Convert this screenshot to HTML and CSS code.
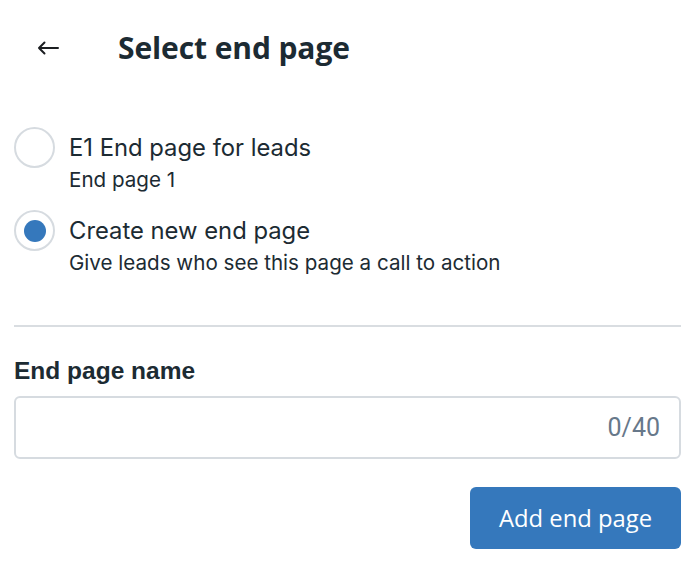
FILE: index.html
```html
<!DOCTYPE html>
<html>
<head>
<meta charset="utf-8">
<link rel="stylesheet" href="styles.css">
</head>
<body>
<div class="page">
  <header class="header">
    <button class="back" aria-label="Back">
      <svg width="22" height="14" viewBox="0 0 22 14" fill="none" stroke="#1c1e21" stroke-width="2" stroke-linecap="round" stroke-linejoin="round">
        <path d="M21 7H2M7.5 1.5L2 7l5.5 5.5"/>
      </svg>
    </button>
    <h1 class="title">Select end page</h1>
  </header>

  <div class="options">
    <label class="option">
      <span class="radio"></span>
      <span class="option-text">
        <span class="option-title">E1 End page for leads</span>
        <span class="option-sub">End page 1</span>
      </span>
    </label>
    <label class="option">
      <span class="radio checked"><span class="dot"></span></span>
      <span class="option-text">
        <span class="option-title">Create new end page</span>
        <span class="option-sub">Give leads who see this page a call to action</span>
      </span>
    </label>
  </div>

  <hr class="divider">

  <div class="field">
    <div class="field-label">End page name</div>
    <div class="input">
      <span class="counter">0/40</span>
    </div>
  </div>

  <div class="actions">
    <button class="primary">Add end page</button>
  </div>
</div>
</body>
</html>
```
FILE: styles.css
```css
* { box-sizing: border-box; }
html, body { margin: 0; padding: 0; background: #fff; }
body {
  font-family: Inter, "Liberation Sans", sans-serif;
  color: #1c2b33;
}
.page {
  padding: 0 19px 0 14px;
}
.header {
  display: flex;
  align-items: center;
  height: 95px;
  padding-left: 23px;
}
.back {
  border: 0;
  background: none;
  padding: 0;
  width: 22px;
  height: 14px;
  display: flex;
}
.title {
  margin: 0 0 0 59px;
  font-family: "Open Sans", sans-serif;
  font-weight: 700;
  font-size: 30px;
  color: #1c2b33;
  letter-spacing: -0.1px;
}
.options {
  display: flex;
  flex-direction: column;
  gap: 14px;
  padding-top: 32px;
}
.option {
  display: flex;
  align-items: flex-start;
}
.radio {
  flex: none;
  width: 41px;
  height: 41px;
  border-radius: 50%;
  border: 2px solid #d6dbe0;
  display: flex;
  align-items: center;
  justify-content: center;
}
.dot {
  width: 22px;
  height: 22px;
  border-radius: 50%;
  background: #3578bc;
}
.option-text {
  display: flex;
  flex-direction: column;
  margin-left: 14px;
  padding-top: 4px;
}
.option-title {
  font-size: 23.8px;
  line-height: 33px;
}
.option-sub {
  font-size: 20.6px;
  line-height: 32px;
}
.divider {
  border: 0;
  border-top: 2px solid #d9dde1;
  margin: 46px 0 0 0;
}
.field {
  padding-top: 31px;
}
.field-label {
  font-family: "Liberation Sans", Arial, sans-serif;
  font-weight: 700;
  font-size: 24.5px;
  line-height: 26px;
  color: #1c2b33;
}
.input {
  margin-top: 12px;
  height: 63px;
  border: 2px solid #d6dbe0;
  border-radius: 6px;
  display: flex;
  align-items: center;
  justify-content: flex-end;
  padding-right: 19px;
}
.counter {
  font-family: Roboto, sans-serif;
  font-size: 25px;
  color: #67788a;
}
.actions {
  display: flex;
  justify-content: flex-end;
  padding-top: 28px;
}
.primary {
  width: 211px;
  height: 62px;
  border: 0;
  border-radius: 6px;
  background: #3578bc;
  color: #fff;
  font-family: "Open Sans", sans-serif;
  font-size: 23.8px;
}
```
